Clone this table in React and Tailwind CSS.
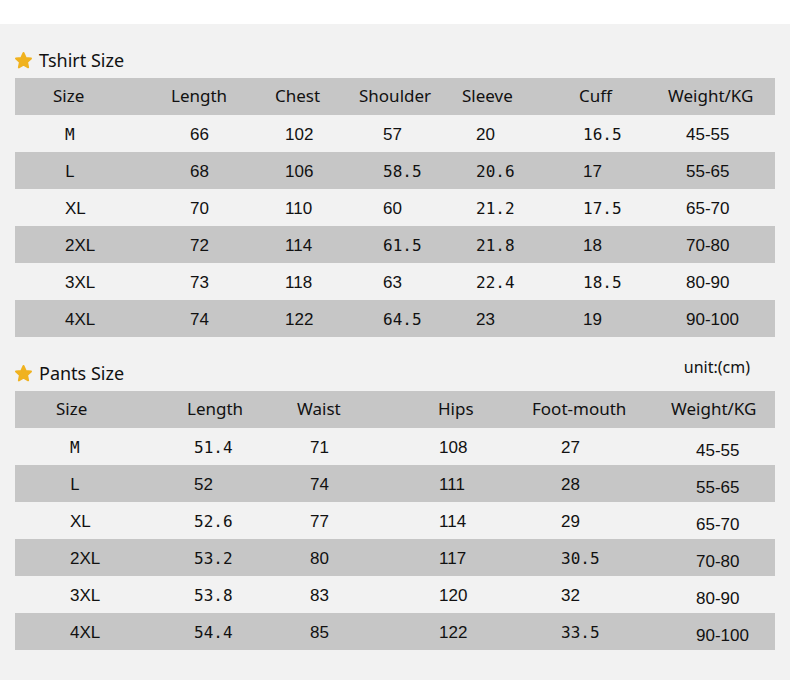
import React from "react";

// Column configs: width of each column plus left offsets for header and values
const tshirtCols = [
  { w: "w-[135px]", h: "pl-[38px]", v: "pl-[50px]" },
  { w: "w-[112px]", h: "pl-[21px]", v: "pl-[40px]" },
  { w: "w-[88px]", h: "pl-[13px]", v: "pl-[23px]" },
  { w: "w-[105px]", h: "pl-[9px]", v: "pl-[33px]" },
  { w: "w-[115px]", h: "pl-[7px]", v: "pl-[21px]" },
  { w: "w-[85px]", h: "pl-[9px]", v: "pl-[13px]" },
  { w: "w-[120px]", h: "pl-[13px]", v: "pl-[31px]" },
];

const pantsCols = [
  { w: "w-[145px]", h: "pl-[41px]", v: "pl-[55px]" },
  { w: "w-[110px]", h: "pl-[27px]", v: "pl-[34px]" },
  { w: "w-[130px]", h: "pl-[27px]", v: "pl-[40px]" },
  { w: "w-[110px]", h: "pl-[38px]", v: "pl-[39px]" },
  { w: "w-[140px]", h: "pl-[22px]", v: "pl-[51px]" },
  { w: "w-[125px]", h: "pl-[21px]", v: "pl-[46px] pt-[5px]" },
];

const tshirtHead = ["Size", "Length", "Chest", "Shoulder", "Sleeve", "Cuff", "Weight/KG"];
const tshirtRows = [
  ["M", "66", "102", "57", "20", "16.5", "45-55"],
  ["L", "68", "106", "58.5", "20.6", "17", "55-65"],
  ["XL", "70", "110", "60", "21.2", "17.5", "65-70"],
  ["2XL", "72", "114", "61.5", "21.8", "18", "70-80"],
  ["3XL", "73", "118", "63", "22.4", "18.5", "80-90"],
  ["4XL", "74", "122", "64.5", "23", "19", "90-100"],
];

const pantsHead = ["Size", "Length", "Waist", "Hips", "Foot-mouth", "Weight/KG"];
const pantsRows = [
  ["M", "51.4", "71", "108", "27", "45-55"],
  ["L", "52", "74", "111", "28", "55-65"],
  ["XL", "52.6", "77", "114", "29", "65-70"],
  ["2XL", "53.2", "80", "117", "30.5", "70-80"],
  ["3XL", "53.8", "83", "120", "32", "80-90"],
  ["4XL", "54.4", "85", "122", "33.5", "90-100"],
];

const Star = () => (
  <svg width="19" height="19" viewBox="0 0 24 24" className="shrink-0">
    <path
      d="M12 2.5l2.9 6.2 6.6.8-4.9 4.6 1.3 6.6L12 17.4l-5.9 3.3 1.3-6.6-4.9-4.6 6.6-.8z"
      fill="#f0b21f"
      stroke="#f0b21f"
      strokeWidth="2.4"
      strokeLinejoin="round"
    />
  </svg>
);

const Title = ({ children }) => (
  <div className="flex items-center gap-[6px] pl-[14px] leading-[24px] text-[18px] text-[#111] font-['Noto_Sans',sans-serif]">
    <Star />
    <span>{children}</span>
  </div>
);

// values with a decimal point or single letters were typeset in a monospace face
const isMono = (val) => val.includes(".") || val === "M" || val === "L";

const SizeTable = ({ cols, head, rows }) => (
  <div className="mx-[15px] text-[#111]">
    <div className="flex h-[37px] items-center bg-[#c6c6c6] pb-[2px] text-[17px] font-['Noto_Sans',sans-serif]">
      {head.map((h, i) => (
        <div key={h} className={`${cols[i].w} ${cols[i].h}`}>
          {h}
        </div>
      ))}
    </div>
    {rows.map((row, r) => (
      <div
        key={row[0]}
        className={`flex h-[37px] items-center pt-[3px] ${r % 2 === 1 ? "bg-[#c6c6c6]" : ""}`}
      >
        {row.map((val, i) => (
          <div
            key={i}
            className={`${cols[i].w} ${cols[i].v} ${
              isMono(val)
                ? "text-[16px] font-['DejaVu_Sans_Mono',monospace]"
                : "text-[17px] font-['Liberation_Sans',Arial,sans-serif]"
            }`}
          >
            {val}
          </div>
        ))}
      </div>
    ))}
  </div>
);

export default function App() {
  return (
    <div className="w-[790px] min-h-[689px] bg-white pt-[24px]">
      <div className="bg-[#f2f2f2] pt-[24px] pb-[30px]">
        <Title>Tshirt Size</Title>
        <div className="h-[6px]" />
        <SizeTable cols={tshirtCols} head={tshirtHead} rows={tshirtRows} />

        <div className="flex h-[54px] items-start justify-between pr-[40px]">
          <div className="mt-[24px]">
            <Title>Pants Size</Title>
          </div>
          <div className="mt-[20px] leading-[20px] text-[16px] text-[#111] font-['Noto_Sans',sans-serif]">
            unit:(cm)
          </div>
        </div>
        <SizeTable cols={pantsCols} head={pantsHead} rows={pantsRows} />
      </div>
    </div>
  );
}
